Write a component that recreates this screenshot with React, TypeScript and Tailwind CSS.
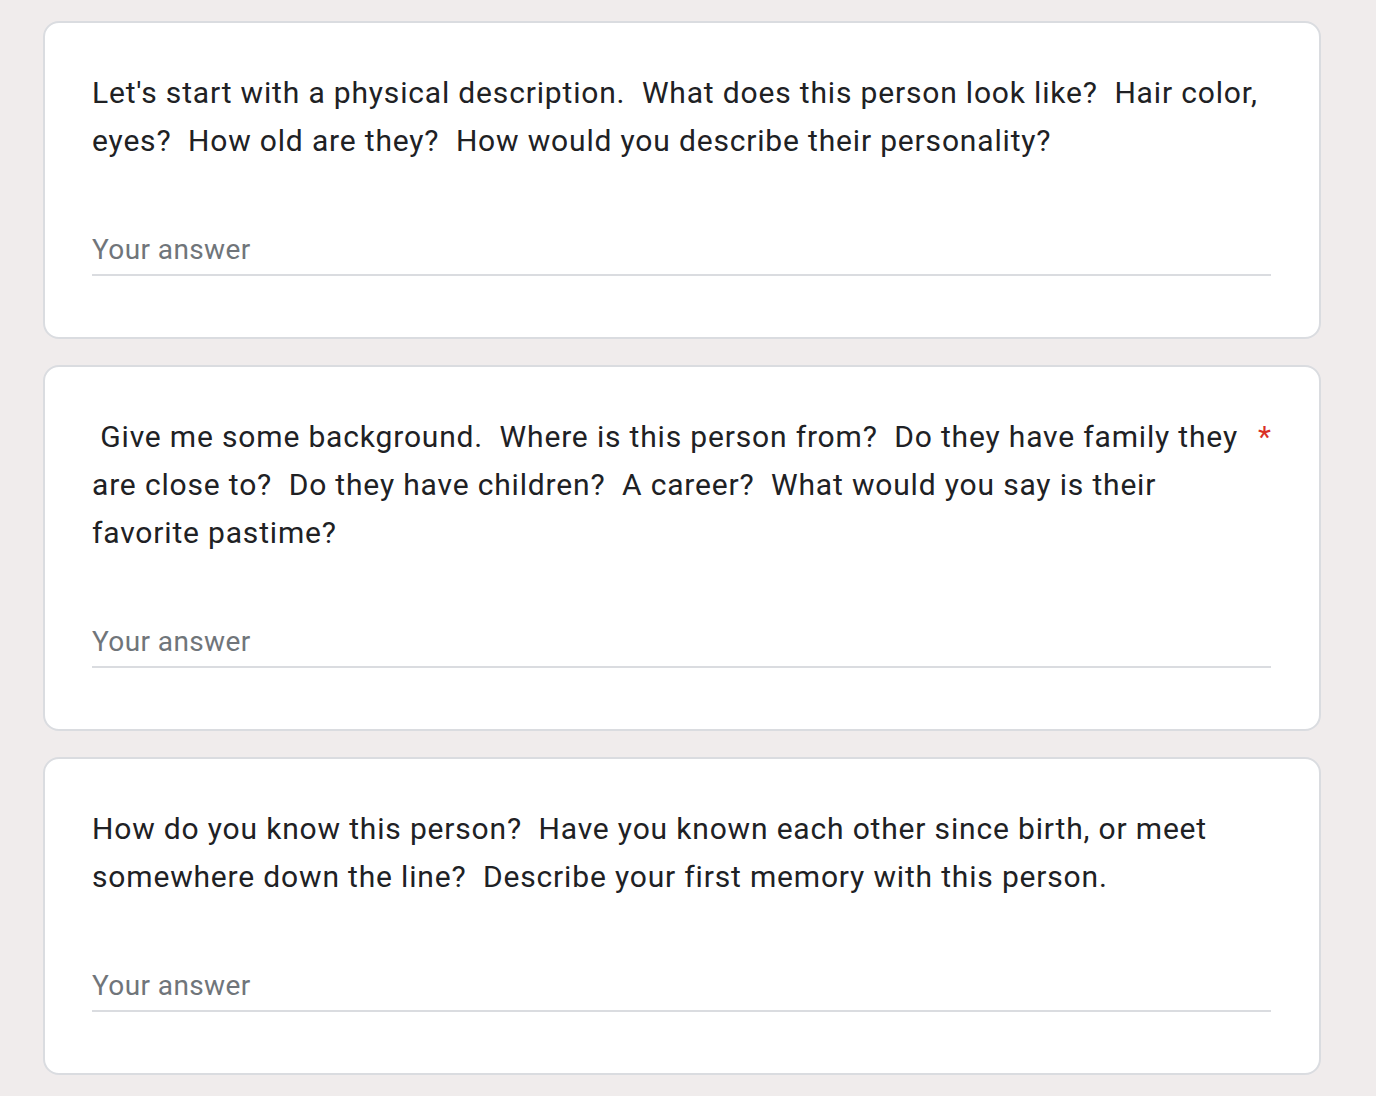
import React from 'react';

interface QuestionCardProps {
  title: string;
  required?: boolean;
}

const QuestionCard: React.FC<QuestionCardProps> = ({ title, required }) => {
  return (
    <div className="bg-white border-2 border-[#dadce0] rounded-[16px] pl-[47px] pr-[48px] pt-[46px] pb-[61px]">
      <div className="flex items-start">
        <div className="whitespace-pre-wrap text-[30px] leading-[48px] text-[#202124] tracking-[0.83px]">
          {title}
        </div>
        {required && (
          <span className="pl-[14px] text-[30px] leading-[48px] text-[#d93025] shrink-0">*</span>
        )}
      </div>
      <div className="mt-[61px] border-b-2 border-[#dadce0]">
        <div className="text-[28px] leading-[48px] text-[#70757a] tracking-[0.4px]">Your answer</div>
      </div>
    </div>
  );
};

const questions: QuestionCardProps[] = [
  {
    title:
      "Let's start with a physical description.  What does this person look like?  Hair color, eyes?  How old are they?  How would you describe their personality?",
  },
  {
    title:
      ' Give me some background.  Where is this person from?  Do they have family they are close to?  Do they have children?  A career?  What would you say is their favorite pastime?',
    required: true,
  },
  {
    title:
      'How do you know this person?  Have you known each other since birth, or meet somewhere down the line?  Describe your first memory with this person.',
  },
];

export default function App() {
  return (
    <div
      className="min-h-screen bg-[#f0ecec] pt-[21px] pl-[43px]"
      style={{ fontFamily: 'Roboto, Arial, sans-serif' }}
    >
      <div className="w-[1278px] flex flex-col gap-[26px]">
        {questions.map((q, i) => (
          <QuestionCard key={i} {...q} />
        ))}
      </div>
    </div>
  );
}
